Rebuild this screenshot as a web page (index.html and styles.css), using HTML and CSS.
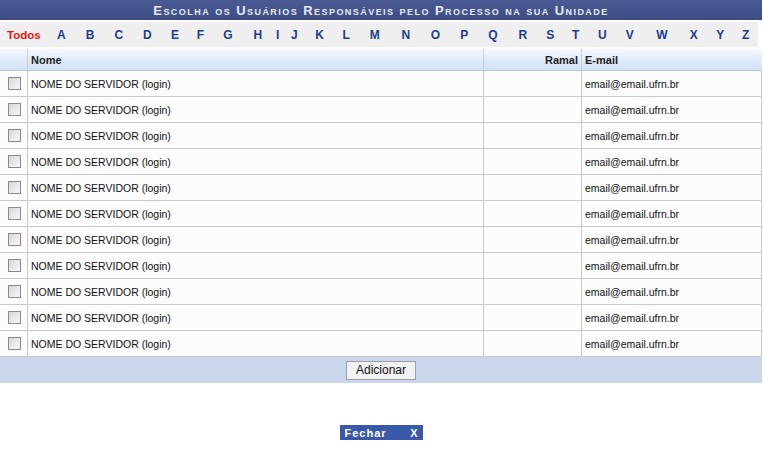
FILE: index.html
```html
<!DOCTYPE html>
<html lang="pt-BR">
<head>
<meta charset="utf-8">
<title>Escolha os Usuários</title>
<link rel="stylesheet" href="styles.css">
</head>
<body>
<div class="panel">
  <div class="title">Escolha os Usuários Responsáveis pelo Processo na sua Unidade</div>
  <table class="letters">
    <tr>
      <td class="todos">Todos</td>
      <td>A</td><td>B</td><td>C</td><td>D</td><td>E</td><td>F</td><td>G</td><td>H</td><td>I</td><td>J</td><td>K</td><td>L</td><td>M</td><td>N</td><td>O</td><td>P</td><td>Q</td><td>R</td><td>S</td><td>T</td><td>U</td><td>V</td><td>W</td><td>X</td><td>Y</td><td>Z</td>
    </tr>
  </table>
  <table class="grid">
    <thead>
      <tr><th class="c-check"></th><th class="c-nome">Nome</th><th class="c-ramal">Ramal</th><th class="c-email">E-mail</th></tr>
    </thead>
    <tbody>
      <tr><td class="c-check"><span class="box"></span></td><td>NOME DO SERVIDOR (login)</td><td></td><td>email@email.ufrn.br</td></tr>
      <tr><td class="c-check"><span class="box"></span></td><td>NOME DO SERVIDOR (login)</td><td></td><td>email@email.ufrn.br</td></tr>
      <tr><td class="c-check"><span class="box"></span></td><td>NOME DO SERVIDOR (login)</td><td></td><td>email@email.ufrn.br</td></tr>
      <tr><td class="c-check"><span class="box"></span></td><td>NOME DO SERVIDOR (login)</td><td></td><td>email@email.ufrn.br</td></tr>
      <tr><td class="c-check"><span class="box"></span></td><td>NOME DO SERVIDOR (login)</td><td></td><td>email@email.ufrn.br</td></tr>
      <tr><td class="c-check"><span class="box"></span></td><td>NOME DO SERVIDOR (login)</td><td></td><td>email@email.ufrn.br</td></tr>
      <tr><td class="c-check"><span class="box"></span></td><td>NOME DO SERVIDOR (login)</td><td></td><td>email@email.ufrn.br</td></tr>
      <tr><td class="c-check"><span class="box"></span></td><td>NOME DO SERVIDOR (login)</td><td></td><td>email@email.ufrn.br</td></tr>
      <tr><td class="c-check"><span class="box"></span></td><td>NOME DO SERVIDOR (login)</td><td></td><td>email@email.ufrn.br</td></tr>
      <tr><td class="c-check"><span class="box"></span></td><td>NOME DO SERVIDOR (login)</td><td></td><td>email@email.ufrn.br</td></tr>
      <tr><td class="c-check"><span class="box"></span></td><td>NOME DO SERVIDOR (login)</td><td></td><td>email@email.ufrn.br</td></tr>
    </tbody>
  </table>
  <div class="footer"><button class="btn">Adicionar</button></div>
</div>
<div class="close-wrap"><span class="close"><span>Fechar</span><span>X</span></span></div>
</body>
</html>
```
FILE: styles.css
```css
html, body { margin: 0; padding: 0; background: #fff; }
body { font-family: "Liberation Sans", Arial, sans-serif; font-size: 11px; color: #111; }

.panel { width: 762px; }

.title {
  height: 20px;
  line-height: 21px;
  background: linear-gradient(#4a5b94, #3c4c83);
  color: #e8ebf5;
  text-align: center;
  font-weight: bold;
  font-size: 13px;
  font-variant: small-caps;
  letter-spacing: 1.45px;
}

.letters {
  width: 758px;
  margin-top: 2px;
  height: 25px;
  border-collapse: collapse;
  background: #efefef;
}
.letters td {
  padding: 0;
  text-align: center;
  font-weight: bold;
  font-size: 12px;
  color: #1c3d8f;
}
.letters td.todos { color: #e8130f; text-align: left; padding-left: 7px; width: 40px; font-size: 11.5px; }

.grid {
  width: 762px;
  margin-top: 2px;
  border-collapse: collapse;
  table-layout: fixed;
}
.grid th {
  height: 21px;
  padding: 0 3px;
  text-align: left;
  font-weight: bold;
  color: #222;
  background: linear-gradient(#f4f8fe, #cfe0f7);
  border-left: 1px solid #c4cdd9;
  border-bottom: 1px solid #c0c8d4;
}
.grid th:first-child { border-left: none; }
.grid th.c-ramal { text-align: right; }
.grid td {
  height: 25px;
  padding: 0 3px;
  background: #fcfcfd;
  border: 1px solid #c9c9c9;
  border-top: none;
  color: #111;
  font-size: 10.5px;
}
.grid td:first-child { border-left: none; }
.c-check { width: 21px; }
.c-nome { width: 449px; }
.c-ramal { width: 91px; }
.grid td.c-check { text-align: center; padding: 0 0 0 1px; }

.box {
  display: inline-block;
  width: 11px;
  height: 11px;
  vertical-align: middle;
  border: 1px solid #8a8a8a;
  background: linear-gradient(135deg, #d8d8d8, #f8f8f8);
}

.footer {
  height: 26px;
  background: #cad6ec;
  display: flex;
  align-items: center;
  justify-content: center;
}
.btn {
  font-family: "Liberation Sans", Arial, sans-serif;
  font-size: 12px;
  height: 19px;
  padding: 0 9px;
  background: #f2f2f2;
  border: 1px solid #9aa0aa;
  color: #111;
}

.close-wrap { display: flex; justify-content: center; margin-top: 42px; }
.close {
  width: 83px;
  height: 15px;
  margin-left: -1px;
  background: #3a58a8;
  color: #fff;
  font-weight: bold;
  font-size: 11px;
  letter-spacing: 1px;
  display: flex;
  justify-content: space-between;
  align-items: center;
  padding: 0 4px 0 5px;
  box-sizing: border-box;
}
```
